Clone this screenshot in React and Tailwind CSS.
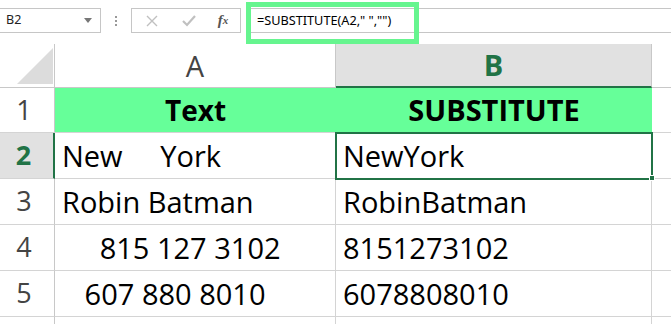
import React from "react";

const GREEN = "bg-[#66ff99]";

function RowHead({ n, selected }) {
  return (
    <div
      className={
        selected
          ? "flex items-center justify-center border-b border-r-2 border-b-[#d4d4d4] border-r-[#217346] bg-[#e1e1e1] pr-[6px] text-[27px] font-bold text-[#217346]"
          : "flex items-center justify-center border-b border-r border-b-[#d4d4d4] border-r-[#c8c8c8] pr-[6px] text-[27px] text-[#444]"
      }
    >
      {n}
    </div>
  );
}

function Cell({ children, className = "" }) {
  return (
    <div className={"flex items-center whitespace-pre border-b border-r border-[#d4d4d4] pl-[7px] " + className}>
      {children}
    </div>
  );
}

export default function App() {
  return (
    <div
      className="relative h-[324px] w-[671px] overflow-hidden bg-white text-black"
      style={{ fontFamily: "'Open Sans', 'Noto Sans', sans-serif" }}
    >
      {/* Formula bar */}
      <div className="flex h-[44px] items-start" style={{ fontFamily: "'Noto Sans', sans-serif" }}>
        <div className="mt-[8px] flex h-[25px] w-[101px] items-center justify-between border-y border-r border-[#c6c6c6] pl-[6px] pr-[8px] text-[12.5px] text-[#222]">
          <span>B2</span>
          <svg width="8" height="5" viewBox="0 0 8 5">
            <path d="M0 0 L8 0 L4 5 Z" fill="#777" />
          </svg>
        </div>
        <div className="mt-[8px] flex h-[25px] w-[30px] flex-col items-center justify-center gap-[2px]">
          <span className="h-[2px] w-[2px] bg-[#999]" />
          <span className="h-[2px] w-[2px] bg-[#999]" />
          <span className="h-[2px] w-[2px] bg-[#999]" />
        </div>
        <div className="mt-[8px] flex h-[25px] w-[110px] items-center border border-[#c6c6c6]">
          <div className="flex w-[40px] justify-center">
            <svg width="12" height="12" viewBox="0 0 12 12">
              <path d="M1 1 L11 11 M11 1 L1 11" stroke="#c0c0c0" strokeWidth="1.4" />
            </svg>
          </div>
          <div className="flex w-[34px] justify-center">
            <svg width="14" height="12" viewBox="0 0 14 12">
              <path d="M1 6 L5 10 L13 1" stroke="#c0c0c0" strokeWidth="2.2" fill="none" />
            </svg>
          </div>
          <div
            className="flex w-[34px] justify-center text-[15px] font-bold italic text-[#555]"
            style={{ fontFamily: "'Liberation Serif', serif" }}
          >
            f<span className="mt-[3px] text-[11px]">x</span>
          </div>
        </div>
        <div className="relative ml-[5px] mt-[8px] flex h-[25px] flex-1 items-center border-y border-[#c6c6c6] pl-[11px] text-[12.7px]">
          <span className="whitespace-pre">=SUBSTITUTE(A2," ","")</span>
          <div className="absolute left-0 top-[-7px] h-[42px] w-[173px] border-[5px] border-[#66f58f]" />
        </div>
      </div>

      {/* Grid */}
      <div className="grid grid-cols-[55px_281px_316px_1fr] grid-rows-[44px_45px_46px_46px_46px_46px_46px] text-[29px]">
        {/* header row */}
        <div className="relative border-b border-r border-[#c8c8c8]">
          <svg className="absolute left-[17px] top-[4px]" width="36" height="36" viewBox="0 0 36 36">
            <path d="M36 0 L36 36 L0 36 Z" fill="#dcdcdc" />
          </svg>
        </div>
        <div className="flex items-center justify-center border-b border-r border-[#c8c8c8] text-[29px] text-[#444]">
          A
        </div>
        <div className="flex items-center justify-center border-b-2 border-r border-b-[#217346] border-r-[#c8c8c8] bg-[#e1e1e1] text-[29px] font-bold text-[#217346]">
          B
        </div>
        <div className="border-b border-[#c8c8c8]" />

        {/* row 1 */}
        <RowHead n="1" />
        <div className={"flex items-center justify-center border-b border-[#d4d4d4] text-[28px] font-bold " + GREEN}>Text</div>
        <div className={"flex items-center justify-center border-b border-[#d4d4d4] font-bold " + GREEN}>SUBSTITUTE</div>
        <div className="border-b border-[#d4d4d4]" />

        {/* row 2 */}
        <RowHead n="2" selected />
        <Cell>{"New     York"}</Cell>
        <Cell className="relative">
          NewYork
          <div className="pointer-events-none absolute left-[-1px] top-[-1px] h-[48px] w-[318px] border-2 border-[#217346]" />
          <div className="absolute right-[-4px] top-[42px] h-[6px] w-[6px] border border-white bg-[#217346]" />
        </Cell>
        <div className="border-b border-[#d4d4d4]" />

        {/* row 3 */}
        <RowHead n="3" />
        <Cell>Robin Batman</Cell>
        <Cell>RobinBatman</Cell>
        <div className="border-b border-[#d4d4d4]" />

        {/* row 4 */}
        <RowHead n="4" />
        <Cell>{"     815 127 3102"}</Cell>
        <Cell>8151273102</Cell>
        <div className="border-b border-[#d4d4d4]" />

        {/* row 5 */}
        <RowHead n="5" />
        <Cell>{"   607 880 8010"}</Cell>
        <Cell>6078808010</Cell>
        <div className="border-b border-[#d4d4d4]" />

        {/* row 6 */}
        <RowHead n="" />
        <Cell />
        <Cell />
        <div className="border-b border-[#d4d4d4]" />
      </div>
    </div>
  );
}
